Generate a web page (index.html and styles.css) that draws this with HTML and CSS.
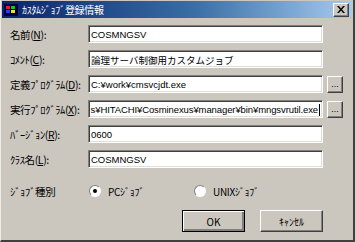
FILE: index.html
```html
<!DOCTYPE html>
<html>
  <head>
    <title>ｶｽﾀﾑｼﾞｮﾌﾞ登録情報</title>
    <meta charset="utf-8" />
    <link rel="stylesheet" href="styles.css">
  </head>
  <body>
    <div class="window">
      <div class="title-bar">
        <svg class="app-icon" width="14" height="12" viewBox="0 0 14 12">
          <rect x="0" y="0" width="14" height="12" fill="#000040" />
          <rect x="2" y="2" width="4" height="3" fill="#e02020" />
          <rect x="7" y="2" width="4" height="3" fill="#20c020" />
          <rect x="2" y="6" width="4" height="3" fill="#2040ff" />
          <rect x="7" y="6" width="4" height="3" fill="#f0e020" />
        </svg>
        <span class="title">ｶｽﾀﾑｼﾞｮﾌﾞ登録情報</span>
        <div class="close-btn">
          <svg width="8" height="7" viewBox="0 0 8 7">
            <path d="M0 0h2l2 2.5 2-2.5h2L5 3.5 8 7H6L4 4.5 2 7H0l3-3.5z" fill="#000" />
          </svg>
        </div>
      </div>

      <div class="content">
        <div class="row">
          <label class="label">名前(<u>N</u>):</label>
          <div class="field">COSMNGSV</div>
        </div>
        <div class="row">
          <label class="label">ｺﾒﾝﾄ(<u>C</u>):</label>
          <div class="field">論理サーバ制御用カスタムジョブ</div>
        </div>
        <div class="row">
          <label class="label">定義ﾌﾟﾛｸﾞﾗﾑ(<u>D</u>):</label>
          <div class="field">C:¥work¥cmsvcjdt.exe</div>
          <div class="browse">...</div>
        </div>
        <div class="row">
          <label class="label">実行ﾌﾟﾛｸﾞﾗﾑ(<u>X</u>):</label>
          <div class="field scrolled"><span>s¥HITACHI¥Cosminexus¥manager¥bin¥mngsvrutil.exe</span><span class="caret"></span></div>
          <div class="browse">...</div>
        </div>
        <div class="row">
          <label class="label">ﾊﾞｰｼﾞｮﾝ(<u>R</u>):</label>
          <div class="field">0600</div>
        </div>
        <div class="row">
          <label class="label">ｸﾗｽ名(<u>L</u>):</label>
          <div class="field">COSMNGSV</div>
        </div>

        <div class="row type-row">
          <span class="label">ｼﾞｮﾌﾞ種別</span>
          <div class="radio-group">
            <div class="radio-item">
              <span class="radio checked"></span>
              <span>PCｼﾞｮﾌﾞ</span>
            </div>
            <div class="radio-item">
              <span class="radio"></span>
              <span>UNIXｼﾞｮﾌﾞ</span>
            </div>
          </div>
        </div>

        <div class="buttons">
          <div class="btn default">OK</div>
          <div class="btn">ｷｬﾝｾﾙ</div>
        </div>
      </div>
    </div>
  </body>
</html>
```

FILE: styles.css
```css
body {
  margin: 0;
  background: #cbc7bf;
  font-family: "Liberation Sans", "Noto Sans CJK JP", sans-serif;
  font-size: 10px;
  color: #000;
}

.window {
  width: 355px;
  height: 242px;
  box-sizing: border-box;
  background: #cbc7bf;
  border-left: 1px solid #eeece6;
  border-right: 2px solid #404040;
  border-bottom: 2px solid #404040;
  padding: 1px;
  display: flex;
  flex-direction: column;
}

.title-bar {
  height: 17px;
  flex-shrink: 0;
  display: flex;
  align-items: center;
  padding: 0 3px 0 2px;
  background: linear-gradient(to right, #0a246a, #3a6ea5 55%, #a6caf0);
  color: #fff;
}

.app-icon {
  flex-shrink: 0;
  margin-right: 4px;
}

.title {
  flex-grow: 1;
  font-family: "Noto Sans CJK JP", sans-serif;
  font-size: 10px;
  letter-spacing: -0.3px;
  white-space: nowrap;
}

.close-btn {
  width: 14px;
  height: 12px;
  background: #cbc7bf;
  border-top: 1px solid #fff;
  border-left: 1px solid #fff;
  border-right: 1px solid #404040;
  border-bottom: 1px solid #404040;
  box-shadow: inset -1px -1px 0 #808080;
  display: flex;
  align-items: center;
  justify-content: center;
}

.content {
  flex-grow: 1;
  display: flex;
  flex-direction: column;
  padding: 7px 0 0 8px;
}

.row {
  display: flex;
  align-items: center;
  height: 18px;
  margin-bottom: 7px;
}

.label {
  width: 78px;
  flex-shrink: 0;
  white-space: nowrap;
  font-family: "Noto Sans CJK JP", sans-serif;
  font-size: 10.5px;
  letter-spacing: -0.4px;
}

.field {
  width: 235px;
  height: 18px;
  flex-shrink: 0;
  box-sizing: border-box;
  display: flex;
  align-items: center;
  background: #fff;
  border-top: 1px solid #808080;
  border-left: 1px solid #808080;
  border-right: 1px solid #fff;
  border-bottom: 1px solid #fff;
  box-shadow: inset 1px 1px 0 #404040, inset -1px -1px 0 #e0ded8;
  padding: 1px 2px 0 2px;
  white-space: nowrap;
  overflow: hidden;
  font-family: "Liberation Sans", "Noto Sans CJK JP", sans-serif;
  font-size: 9.5px;
}

.field.scrolled {
  justify-content: flex-end;
  letter-spacing: -0.1px;
}

.caret {
  display: inline-block;
  flex-shrink: 0;
  width: 1px;
  height: 12px;
  margin-left: 1px;
  background: #000;
}

.browse {
  width: 16px;
  height: 17px;
  flex-shrink: 0;
  box-sizing: border-box;
  margin-left: 4px;
  border-top: 1px solid #fff;
  border-left: 1px solid #fff;
  border-right: 1px solid #404040;
  border-bottom: 1px solid #404040;
  box-shadow: inset -1px -1px 0 #808080;
  text-align: center;
  line-height: 15px;
  font-size: 9px;
  letter-spacing: 0;
}

.type-row {
  margin-top: 7px;
}

.radio-group {
  display: flex;
}

.radio-item {
  width: 105px;
  display: flex;
  align-items: center;
  gap: 7px;
  font-family: "Noto Sans CJK JP", sans-serif;
  font-size: 10px;
  letter-spacing: -0.3px;
}

.radio {
  width: 12px;
  height: 12px;
  margin-left: 1px;
  box-sizing: border-box;
  border-radius: 50%;
  background: #fff;
  border: 1px solid;
  border-color: #808080 #fff #fff #808080;
  display: flex;
  align-items: center;
  justify-content: center;
}

.radio.checked::after {
  content: "";
  width: 4px;
  height: 4px;
  border-radius: 50%;
  background: #000;
}

.buttons {
  display: flex;
  justify-content: flex-end;
  gap: 15px;
  padding-right: 29px;
  margin-top: 3px;
}

.btn {
  width: 63px;
  height: 22px;
  box-sizing: border-box;
  border-top: 1px solid #fff;
  border-left: 1px solid #fff;
  border-right: 1px solid #404040;
  border-bottom: 1px solid #404040;
  box-shadow: inset -1px -1px 0 #808080;
  display: flex;
  align-items: center;
  justify-content: center;
  font-family: "Noto Sans CJK JP", sans-serif;
  font-size: 10px;
}

.btn.default {
  border: 1px solid #000;
  box-shadow: inset 1px 1px 0 #fff, inset -2px -2px 0 #808080;
}
```
